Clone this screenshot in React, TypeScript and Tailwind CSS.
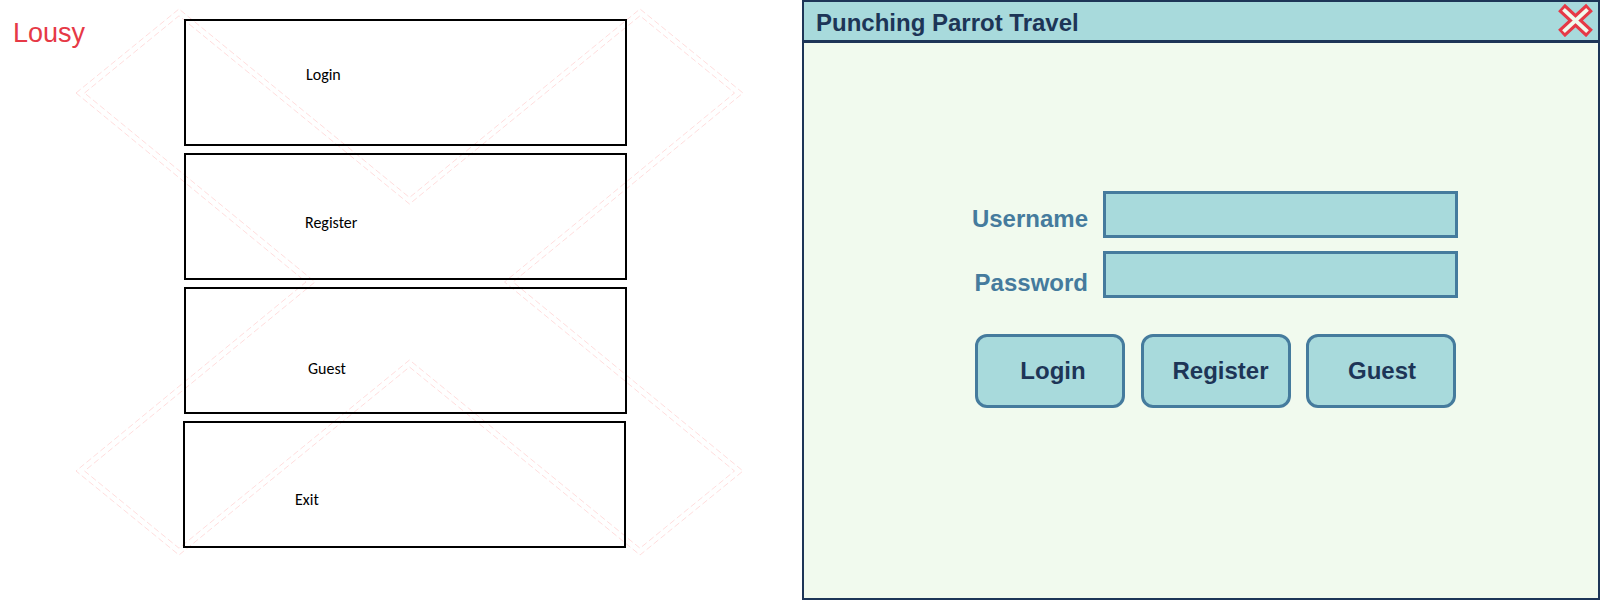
const menuItems = [
  { label: "Login", place: "pt-11 pl-[120px]" },
  { label: "Register", place: "pt-[58px] pl-[119px]" },
  { label: "Guest", place: "pt-[70px] pl-[122px]" },
  { label: "Exit", place: "pt-[67px] pl-[110px] -ml-px mr-px" },
];

function CrossPattern() {
  return (
    <svg
      className="pointer-events-none absolute top-[8px] left-[75px]"
      width="669"
      height="549"
      viewBox="75 8 669 549"
      fill="none"
      stroke="#ffd4d4"
      strokeWidth="0.8"
      strokeDasharray="6 3"
      aria-hidden="true"
    >
      <path d="M76 93 179 9 409.500 197.500 640 9 743 93 513 282 743 471 640 555 409.500 367 179 555 76 471 306 282Z" />
      <path d="M84.500 93 179 15.800 409.500 204 640 15.800 734.500 93 504.500 282 734.500 471 640 548.200 409.500 360 179 548.200 84.500 471 315 282Z" />
    </svg>
  );
}

function Sketch() {
  return (
    <section className="relative flex items-start bg-white pt-[19px] pl-[13px]">
      <CrossPattern />
      <h1 className="w-[171px] shrink-0 text-[27px] leading-7 text-[#e63946]">Lousy</h1>
      <nav className="relative mr-[175px] flex flex-1 flex-col gap-[7px]">
        {menuItems.map((item) => (
          <button
            key={item.label}
            type="button"
            className={`flex h-[127px] items-start border-2 border-black text-left font-['Carlito','Lato','Liberation_Sans',sans-serif] text-base leading-5 text-black ${item.place}`}
          >
            {item.label}
          </button>
        ))}
      </nav>
    </section>
  );
}

const fields = [
  { id: "username", label: "Username", type: "text", place: "pt-2" },
  { id: "password", label: "Password", type: "password", place: "pt-3" },
];

const actions = [
  { label: "Login", place: "pl-1.5" },
  { label: "Register", place: "pl-2.5" },
  { label: "Guest", place: "pl-0.5" },
];

function TravelWindow() {
  return (
    <section className="flex flex-col border-2 border-[#1d3557] bg-[#f1faee]">
      <header className="flex h-[41px] items-center justify-between border-b-3 border-[#1d3557] bg-[#a8dadc] pr-[4px] pl-3">
        <h2 className="pt-1 text-2xl leading-7 font-bold text-[#1d3557]">Punching Parrot Travel</h2>
        <button type="button" aria-label="Close" className="mb-0.5">
          <svg width="36" height="34" viewBox="0 0 36 34" fill="none" className="block">
            <path d="M3.500 4.500 31.500 30.500M31.500 4.500 3.500 30.500" stroke="#e63946" strokeWidth="10" />
            <path d="M5.500 6.400 29.500 28.600M29.500 6.400 5.500 28.600" stroke="#f1faee" strokeWidth="4" />
          </svg>
        </button>
      </header>
      <form className="flex flex-col items-center pt-[148px] pl-7" onSubmit={(e) => e.preventDefault()}>
        <div className="w-[486px] max-w-full">
          <div className="flex flex-col gap-[13px]">
            {fields.map((field) => (
              <div key={field.id} className="flex justify-end gap-[15px]">
                <label htmlFor={field.id} className={`text-2xl leading-10 font-bold text-[#457b9d] ${field.place} h-[47px]`}>
                  {field.label}
                </label>
                <input
                  id={field.id}
                  type={field.type}
                  className="h-[47px] w-[355px] shrink-0 border-3 border-[#457b9d] bg-[#a8dadc] px-3 text-xl text-[#1d3557] outline-none"
                />
              </div>
            ))}
          </div>
          <div className="mt-9 flex justify-between pr-0.5 pl-[3px]">
            {actions.map((action) => (
              <button
                key={action.label}
                type="button"
                className={`h-[74px] w-[150px] rounded-xl border-3 border-[#457b9d] bg-[#a8dadc] text-2xl font-bold text-[#1d3557] ${action.place}`}
              >
                {action.label}
              </button>
            ))}
          </div>
        </div>
      </form>
    </section>
  );
}

export default function App() {
  return (
    <main className="grid min-h-screen grid-cols-[401fr_399fr] bg-white font-['Liberation_Sans',Arial,sans-serif]">
      <Sketch />
      <TravelWindow />
    </main>
  );
}
